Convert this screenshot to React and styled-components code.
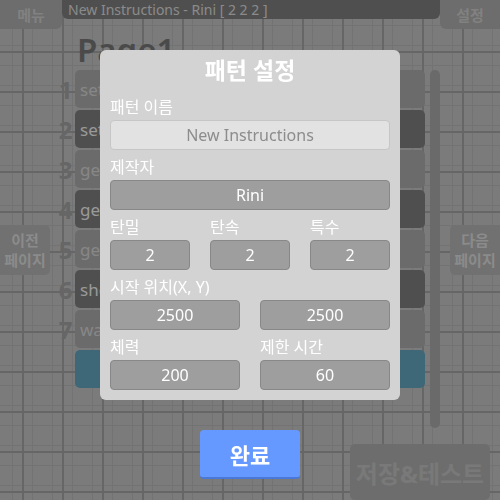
import React from 'react';
import styled, { createGlobalStyle } from 'styled-components';

const GlobalStyle = createGlobalStyle`
  html, body {
    margin: 0;
    padding: 0;
    width: 500px;
    height: 500px;
    overflow: hidden;
  }
  * {
    box-sizing: border-box;
  }
`;

const FONT = `"Noto Sans", "Noto Sans CJK KR", sans-serif`;

// Page (under the modal backdrop)
const Page = styled.div`
  position: relative;
  width: 500px;
  height: 500px;
  overflow: hidden;
  display: flex;
  flex-direction: column;
  font-family: ${FONT};
  background-color: #b0b0b0;
  background-image:
    linear-gradient(90deg, #929292 2px, transparent 2px),
    linear-gradient(#929292 2px, transparent 2px),
    linear-gradient(90deg, #a5a5a5 1px, transparent 1px),
    linear-gradient(#a5a5a5 1px, transparent 1px);
  background-size: 40px 40px, 40px 40px, 20px 20px, 20px 20px;
  background-position: 22px 11px, 22px 11px, 12px 5px, 12px 5px;
`;

const TopBar = styled.div`
  display: flex;
  align-items: flex-start;
  height: 29px;
`;

const Tab = styled.div`
  width: ${props => props.width}px;
  height: 29px;
  display: flex;
  align-items: center;
  justify-content: center;
  background: #9d9d9d;
  color: #b9b9b9;
  font-weight: 700;
  font-size: 15px;
  border-radius: ${props => (props.side === 'left' ? '0 0 6px 0' : '0 0 0 6px')};
`;

const TitleBar = styled.div`
  flex: 1;
  height: 19px;
  padding-left: 6px;
  background: #727272;
  color: #c7c7c7;
  font-size: 14px;
  line-height: 19px;
  border-radius: 0 0 6px 6px;
  white-space: nowrap;
  overflow: hidden;
`;

const Body = styled.div`
  display: flex;
  height: 416px;
`;

const SideColumn = styled.div`
  width: 50px;
  padding-top: 196px;
`;

const PageButton = styled.div`
  width: 50px;
  height: 50px;
  display: flex;
  flex-direction: column;
  align-items: center;
  justify-content: center;
  background: #a2a2a2;
  color: #c8c8c8;
  font-weight: 700;
  font-size: 15px;
  line-height: 20px;
  border-radius: ${props => (props.side === 'left' ? '0 5px 5px 0' : '5px 0 0 5px')};
`;

const Center = styled.div`
  width: 375px;
  padding-left: 6px;
`;

const PageTitle = styled.h1`
  margin: 0 0 0 21px;
  height: 41px;
  font-size: 33px;
  font-weight: 600;
  line-height: 41px;
  color: #6b6b6b;
`;

const List = styled.div`
  display: flex;
  flex-direction: column;
  gap: 2px;
`;

const Line = styled.div`
  display: flex;
  align-items: center;
`;

const LineNumber = styled.div`
  width: 19px;
  font-size: 24px;
  font-weight: 700;
  color: #939393;
  text-align: center;
`;

const ROW_COLORS = {
  light: ['#9a9a9a', '#c2c2c2'],
  dark: ['#717171', '#dddddd'],
  active: ['#5a95ab', '#dddddd'],
};

const Row = styled.div`
  width: 350px;
  height: 38px;
  padding-left: 5px;
  display: flex;
  align-items: center;
  border-radius: 5px;
  background: ${props => ROW_COLORS[props.tone][0]};
  color: ${props => ROW_COLORS[props.tone][1]};
  font-size: 17px;
`;

const Scrollbar = styled.div`
  width: 10px;
  height: 358px;
  margin: 41px 0 0 5px;
  border-radius: 5px;
  background: #989898;
`;

const RightColumn = styled(SideColumn)`
  margin-left: 10px;
`;

const Footer = styled.div`
  display: flex;
  justify-content: flex-end;
  padding-right: 10px;
`;

const SaveButton = styled.div`
  width: 140px;
  height: 56px;
  display: flex;
  align-items: center;
  justify-content: center;
  background: #9d9d9d;
  color: #aeaeae;
  font-size: 24px;
  font-weight: 700;
  border-radius: 5px;
`;

// Modal
const Backdrop = styled.div`
  position: fixed;
  inset: 0;
  background: rgba(0, 0, 0, 0.3);
  display: flex;
  flex-direction: column;
  align-items: center;
  padding-top: 50px;
  font-family: ${FONT};
`;

const Modal = styled.div`
  width: 300px;
  height: 350px;
  padding: 0 10px;
  background: #d3d3d3;
  border-radius: 6px;
`;

const ModalTitle = styled.div`
  height: 40px;
  line-height: 40px;
  text-align: center;
  font-size: 23px;
  font-weight: 700;
  color: #ffffff;
`;

const FieldRow = styled.div`
  display: grid;
  grid-template-columns: ${props => props.columns};
  column-gap: 20px;
`;

const Label = styled.div`
  height: 30px;
  padding-top: 5px;
  line-height: 24px;
  font-size: 16px;
  color: #ffffff;
  white-space: nowrap;
`;

const Input = styled.div`
  height: 30px;
  display: flex;
  align-items: center;
  justify-content: center;
  font-size: 16px;
  border-radius: 4px;
  border: 1px solid ${props => (props.light ? '#c6c6c6' : '#888888')};
  background: ${props => (props.light ? '#e2e2e2' : '#9e9e9e')};
  color: ${props => (props.light ? '#8c8c8c' : '#ffffff')};
`;

const DoneButton = styled.div`
  width: 100px;
  height: 49px;
  margin-top: 30px;
  display: flex;
  align-items: center;
  justify-content: center;
  background: #6699ff;
  border-bottom: 2px solid #4a78d8;
  border-radius: 4px;
  color: #ffffff;
  font-size: 22px;
  font-weight: 700;
`;

const rows = [
  { text: 'setSpeed', tone: 'light' },
  { text: 'setAngle', tone: 'dark' },
  { text: 'getPos', tone: 'light' },
  { text: 'getAim', tone: 'dark' },
  { text: 'getTime', tone: 'light' },
  { text: 'shoot', tone: 'dark' },
  { text: 'wait', tone: 'light' },
  { text: '', tone: 'active' },
];

const Field = ({ label, value, light }) => (
  <div>
    <Label>{label}</Label>
    <Input light={light}>{value}</Input>
  </div>
);

const App = () => (
  <>
    <GlobalStyle />
    <Page>
      <TopBar>
        <Tab width={62} side="left">메뉴</Tab>
        <TitleBar>New Instructions - Rini [ 2 2 2 ]</TitleBar>
        <Tab width={60} side="right">설정</Tab>
      </TopBar>
      <Body>
        <SideColumn>
          <PageButton side="left">
            <span>이전</span>
            <span>페이지</span>
          </PageButton>
        </SideColumn>
        <Center>
          <PageTitle>Page1</PageTitle>
          <List>
            {rows.map((row, i) => (
              <Line key={i}>
                <LineNumber>{i < 7 ? i + 1 : ''}</LineNumber>
                <Row tone={row.tone}>{row.text}</Row>
              </Line>
            ))}
          </List>
        </Center>
        <Scrollbar />
        <RightColumn>
          <PageButton side="right">
            <span>다음</span>
            <span>페이지</span>
          </PageButton>
        </RightColumn>
      </Body>
      <Footer>
        <SaveButton>저장&amp;테스트</SaveButton>
      </Footer>
    </Page>
    <Backdrop>
      <Modal>
        <ModalTitle>패턴 설정</ModalTitle>
        <Field label="패턴 이름" value="New Instructions" light />
        <Field label="제작자" value="Rini" />
        <FieldRow columns="1fr 1fr 1fr">
          <Field label="탄밀" value="2" />
          <Field label="탄속" value="2" />
          <Field label="특수" value="2" />
        </FieldRow>
        <FieldRow columns="1fr 1fr">
          <Field label="시작 위치(X, Y)" value="2500" />
          <Field label="" value="2500" />
        </FieldRow>
        <FieldRow columns="1fr 1fr">
          <Field label="체력" value="200" />
          <Field label="제한 시간" value="60" />
        </FieldRow>
      </Modal>
      <DoneButton>완료</DoneButton>
    </Backdrop>
  </>
);

export default App;
